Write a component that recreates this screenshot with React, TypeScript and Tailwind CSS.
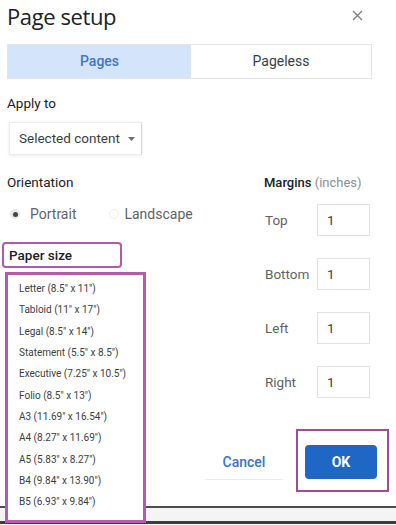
import React from 'react';

const paperSizes = [
  'Letter (8.5" x 11")',
  'Tabloid (11" x 17")',
  'Legal (8.5" x 14")',
  'Statement (5.5" x 8.5")',
  'Executive (7.25" x 10.5")',
  'Folio (8.5" x 13")',
  'A3 (11.69" x 16.54")',
  'A4 (8.27" x 11.69")',
  'A5 (5.83" x 8.27")',
  'B4 (9.84" x 13.90")',
  'B5 (6.93" x 9.84")',
];

const margins = ['Top', 'Bottom', 'Left', 'Right'];

export default function App() {
  return (
    <div className="relative w-[396px] h-[525px] overflow-hidden bg-white text-[#202124] font-['Roboto',sans-serif]">
      {/* Header */}
      <div className="h-[44px] flex items-start justify-between pl-[7px] pr-[33px]">
        <h1 className="mt-[2px] text-[22px] leading-[28px] font-['Open_Sans',sans-serif] font-normal tracking-[-0.4px]">
          Page setup
        </h1>
        <svg width="11" height="11" viewBox="0 0 11 11" className="mt-[10px]">
          <path d="M1 1L10 10M10 1L1 10" stroke="#7a7f85" strokeWidth="1.3" />
        </svg>
      </div>

      {/* Tabs */}
      <div className="ml-[7px] w-[365px] h-[35px] flex border border-[#e2e4e7]">
        <div className="w-[183px] bg-[#d4e4fa] flex items-center justify-center text-[14px] font-medium text-[#3d78c6]">
          Pages
        </div>
        <div className="flex-1 flex items-center justify-center text-[14px] text-[#3c4043]">Pageless</div>
      </div>

      {/* Apply to */}
      <div className="ml-[7px] mt-[15px] text-[13.5px] leading-[18px]">Apply to</div>
      <div className="ml-[9px] mt-[10px] w-[133px] h-[33px] flex items-center pl-[9px] gap-[8px] border border-[#ececec] border-r-[#d8d8d8] shadow-[0_1px_3px_rgba(0,0,0,0.08)] text-[13.5px] text-[#3c4043]">
        Selected content
        <svg width="7" height="4" viewBox="0 0 7 4">
          <path d="M0 0H7L3.5 4Z" fill="#6b6f74" />
        </svg>
      </div>

      {/* Orientation + margins */}
      <div className="mt-[18px] flex">
        <div className="w-[264px]">
          <div className="ml-[7px] text-[13.5px] leading-[18px]">Orientation</div>
          <div className="mt-[14px] h-[18px] flex items-center text-[14px] text-[#5f6368]">
            <span className="ml-[10px] w-[10px] h-[10px] rounded-full bg-[#e8e8e8] flex items-center justify-center">
              <span className="w-[5px] h-[5px] rounded-full bg-[#444]" />
            </span>
            <span className="ml-[10px]">Portrait</span>
            <span className="ml-[33px] w-[10px] h-[10px] rounded-full border border-[#eeeeee]" />
            <span className="ml-[5px]">Landscape</span>
          </div>
          <div className="ml-[2px] mt-[19px] w-[120px] h-[26px] flex items-center pl-[5px] border-2 border-[#b05aa9] rounded-[4px] text-[13.5px] font-medium">
            Paper size
          </div>
        </div>

        <div className="w-[110px] pt-[1px]">
          <div className="text-[13px] leading-[18px]">
            <span className="font-medium">Margins</span>{' '}
            <span className="text-[#8a8e93]">(inches)</span>
          </div>
          <div className="mt-[12px] flex flex-col gap-[22px]">
            {margins.map((m) => (
              <div key={m} className="flex items-center h-[32px]">
                <span className="w-[53px] pl-[1px] text-[13.5px] text-[#5f6368]">{m}</span>
                <div className="w-[53px] h-[32px] border border-[#dfe1e4] flex items-center pl-[9px] text-[13.5px] text-[#3c4043]">
                  1
                </div>
              </div>
            ))}
          </div>
        </div>
      </div>

      {/* Buttons */}
      <div className="mt-[31px] flex justify-end pr-[7px]">
        <button className="self-center mt-[3px] mr-[12px] w-[80px] h-[34px] text-[14px] font-medium text-[#3b74c4] shadow-[0_2px_0_-1px_#ececec]">
          Cancel
        </button>
        <div className="w-[93px] h-[63px] border-2 border-[#9b4f98] pl-[7px] pt-[14px]">
          <button className="w-[72px] h-[34px] rounded-[4px] bg-[#1f67c4] text-white text-[14px] font-bold">
            OK
          </button>
        </div>
      </div>

      {/* Bottom edge of the window */}
      <div className="mt-[14px] h-[2px] bg-[#4d4d4d]" />
      <div className="h-[13px] bg-[#f4f4f4]" />
      <div className="h-[3px] bg-[#3c3c3c]" />

      {/* Open paper size menu */}
      <div className="absolute left-[5px] top-[272px] w-[141px] h-[251px] bg-white border-[3px] border-[#b35cae] pt-[3px] pl-[11px]">
        {paperSizes.map((p) => (
          <div key={p} className="h-[21.3px] flex items-center text-[10px] text-[#3c4043] whitespace-nowrap">
            {p}
          </div>
        ))}
      </div>
    </div>
  );
}
